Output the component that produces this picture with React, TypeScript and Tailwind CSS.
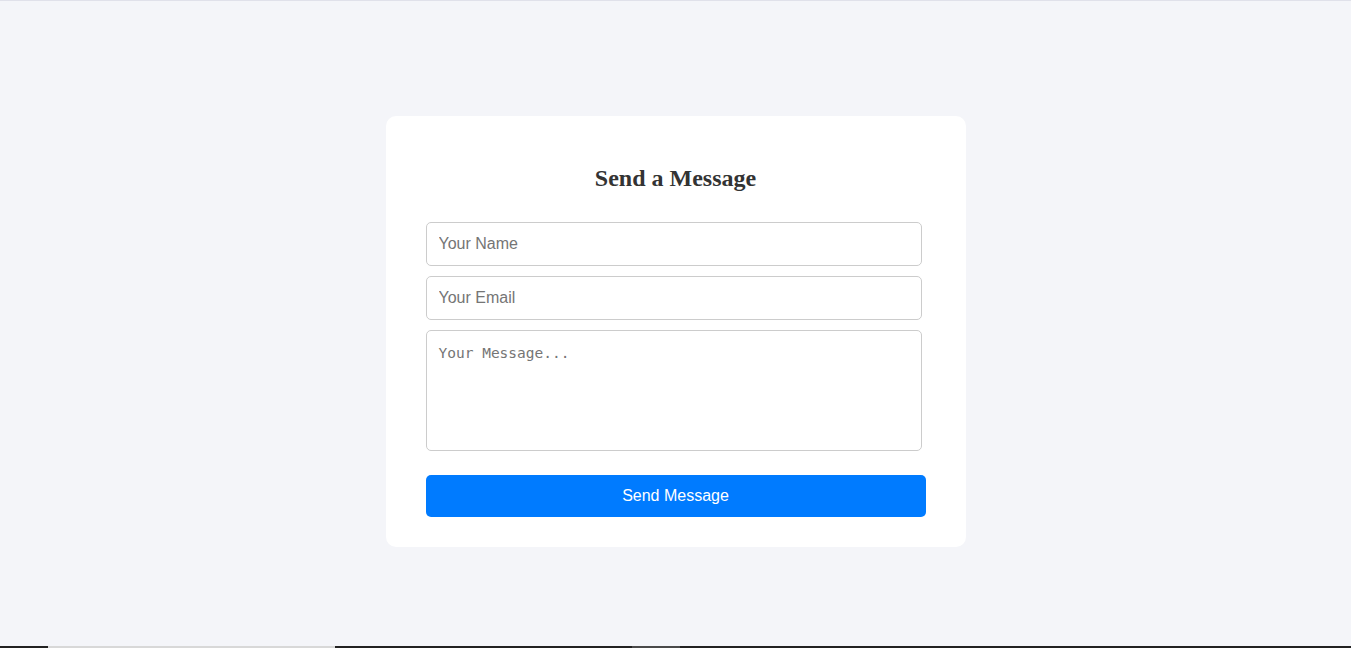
export default function App() {
  return (
    <div className="flex min-h-[648px] flex-col bg-[#f4f5f9]">
      <div className="h-px bg-[#e0e1ea]" />
      <main className="flex flex-1 justify-center pt-[115px]">
        <div className="h-[431px] w-[580px] rounded-[10px] bg-white px-10 pt-[48px]">
          <h2 className="text-center font-['Liberation_Serif',serif] text-[24px] font-bold leading-[28px] text-[#333]">
            Send a Message
          </h2>
          <form className="mt-[30px] flex flex-col" onSubmit={(e) => e.preventDefault()}>
            <input
              type="text"
              placeholder="Your Name"
              className="h-[44px] w-[496px] rounded-[5px] border border-[#ccc] px-3 font-['Liberation_Sans',Arial,sans-serif] text-[16px] outline-none placeholder:text-[#757575]"
            />
            <input
              type="email"
              placeholder="Your Email"
              className="mt-[10px] h-[44px] w-[496px] rounded-[5px] border border-[#ccc] px-3 font-['Liberation_Sans',Arial,sans-serif] text-[16px] outline-none placeholder:text-[#757575]"
            />
            <textarea
              placeholder="Your Message..."
              className="mt-[10px] h-[121px] w-[496px] resize-none rounded-[5px] border border-[#ccc] px-3 pt-[13px] font-['DejaVu_Sans_Mono',monospace] text-[14.5px] leading-[18px] outline-none placeholder:text-[#757575]"
            />
            <button
              type="submit"
              className="mt-[24px] h-[42px] w-[500px] rounded-[5px] bg-[#007bff] font-['Liberation_Sans',Arial,sans-serif] text-[16px] text-white"
            >
              Send Message
            </button>
          </form>
        </div>
      </main>
      <div className="flex h-[2px] bg-[#222]">
        <div className="ml-[48px] w-[287px] bg-[#d8d8d8]" />
        <div className="ml-[297px] w-[48px] bg-[#4a4a4a]" />
      </div>
    </div>
  );
}
